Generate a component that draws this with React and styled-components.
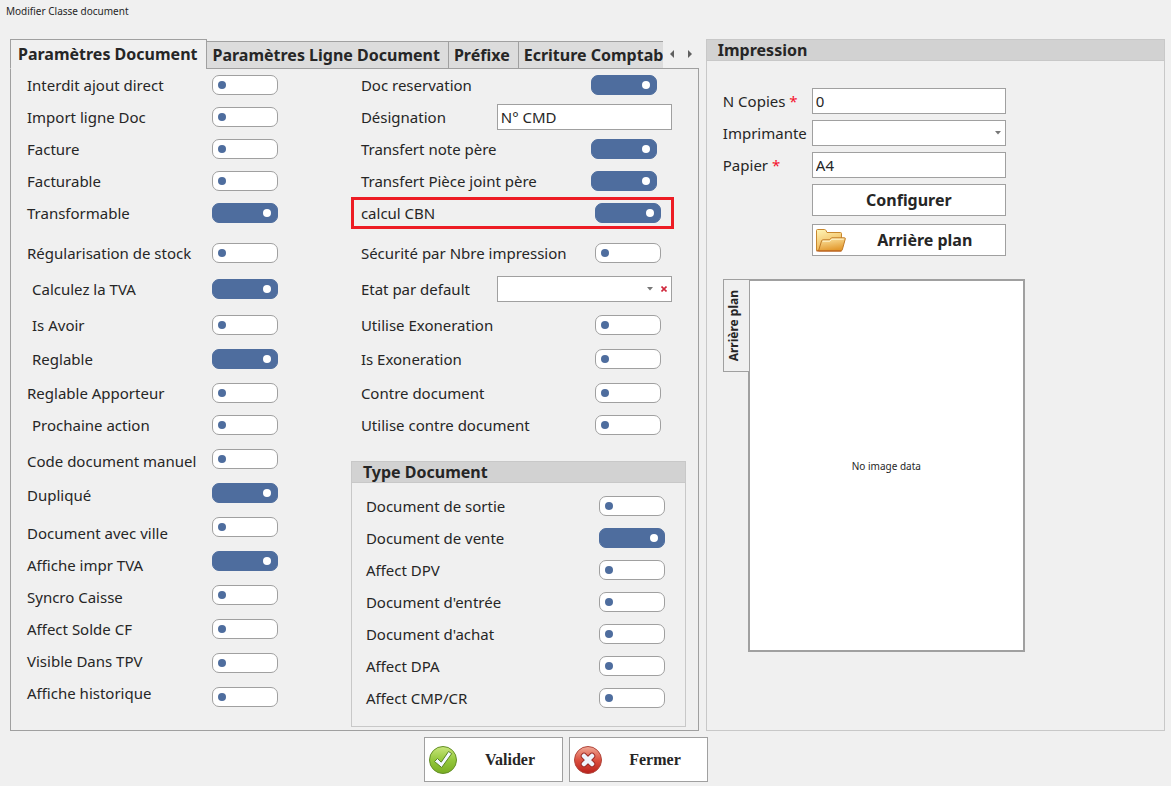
import React, { useId, useState } from "react";
import styled, { createGlobalStyle } from "styled-components";

const LINE = "#a0a0a0";
const SOFT_LINE = "#c8c8c8";
const BLUE = "#4e6d9e";

const GlobalStyle = createGlobalStyle`
  * {
    box-sizing: border-box;
  }

  body {
    margin: 0;
    background-color: #f0f0f0;
    color: #262626;
    font-family: "Noto Sans", "Open Sans", sans-serif;
    font-size: 15px;
  }

  input, select, button {
    font: inherit;
    color: inherit;
  }
`;

const Page = styled.div`
  padding: 0 6px 4px 10px;
`;

const WindowTitle = styled.h1`
  margin: 0 0 0 -4px;
  height: 39px;
  font-size: 10px;
  font-weight: normal;
  line-height: 22px;
`;

const Columns = styled.main`
  display: grid;
  grid-template-columns: 3fr 2fr;
  gap: 7px;
`;

const Settings = styled.section`
  display: flex;
  flex-direction: column;
  min-width: 0;
`;

const TabBar = styled.div`
  display: flex;
  align-items: flex-end;
  height: 30px;
  margin-bottom: -1px;
  position: relative;
`;

const TabList = styled.div`
  display: flex;
  align-items: flex-end;
  flex: 1;
  min-width: 0;
  overflow: hidden;
`;

const Tab = styled.button`
  flex: none;
  height: ${({ $active }) => ($active ? 30 : 28)}px;
  padding: ${({ $active }) => ($active ? "0 9px 0 7px" : "0 8px 0 5px")};
  margin-left: ${({ $active }) => ($active ? 0 : -1)}px;
  border: 1px solid ${LINE};
  border-bottom-color: ${({ $active }) => ($active ? "#f0f0f0" : LINE)};
  background-color: ${({ $active }) => ($active ? "#f0f0f0" : "#dcdcdc")};
  font-size: 16px;
  font-weight: bold;
  line-height: 26px;
  white-space: nowrap;
`;

const TabArrows = styled.div`
  display: flex;
  justify-content: space-between;
  width: 36px;
  height: 30px;
  padding: 0 4px;
`;

const IconButton = styled.button`
  display: flex;
  align-items: center;
  justify-content: center;
  width: 10px;
  padding: 0;
  border: 0;
  background: none;
`;

const TabPanel = styled.div`
  display: grid;
  grid-template-columns: 324fr 335fr;
  flex: 1;
  padding: 0 12px 3px 16px;
  border: 1px solid ${LINE};
`;

const Stacks = styled.div`
  display: grid;
  grid-template-columns: 185px 66px;
  align-content: start;
`;

const Stack = styled.div`
  display: flex;
  flex-direction: column;
`;

const Cell = styled.div`
  height: ${({ $height }) => $height}px;
  padding-left: ${({ $indent }) => ($indent ? 5 : 0)}px;
`;

const Label = styled.label`
  line-height: 32px;
  white-space: nowrap;
`;

const ToggleBox = styled.input`
  appearance: none;
  display: flex;
  align-items: center;
  flex: none;
  width: 66px;
  height: 20px;
  margin: ${({ $stacked }) => ($stacked ? "6px 0" : 0)};
  padding: 0 6px 0 5px;
  border: 1px solid ${LINE};
  border-radius: 7px;
  background-color: #fff;

  &::before {
    content: "";
    width: 8px;
    height: 8px;
    border-radius: 50%;
    background-color: ${BLUE};
  }

  &:checked {
    justify-content: flex-end;
    border-color: ${BLUE};
    background-color: ${BLUE};
  }

  &:checked::before {
    background-color: #fff;
  }
`;

const Row = styled.div`
  display: flex;
  align-items: center;
  justify-content: space-between;
  height: 32px;
  margin-bottom: ${({ $after }) => $after || 0}px;
  padding: 0 ${({ $right }) => $right}px 0 ${({ $left }) => $left || 10}px;
`;

const MarkedRow = styled(Row)`
  margin-right: 12px;
  border: 3px solid #ed1c24;
`;

const TextInput = styled.input`
  width: ${({ $width }) => $width || "100%"};
  height: 26px;
  padding: 0 3px;
  border: 1px solid ${LINE};
  background-color: #fff;
`;

const SelectWrap = styled.div`
  display: flex;
  align-items: center;
  gap: 6px;
  width: ${({ $width }) => $width || "100%"};
  height: 26px;
  padding-right: ${({ $clearable }) => ($clearable ? 2 : 4)}px;
  border: 1px solid ${LINE};
  background-color: #fff;
`;

const SelectBox = styled.select`
  appearance: none;
  flex: 1;
  min-width: 0;
  height: 24px;
  padding: 0 3px;
  border: 0;
  background: none;
`;

const Group = styled.section`
  border: 1px solid ${SOFT_LINE};
`;

const GroupTitle = styled.h2`
  margin: 0;
  padding-left: 11px;
  height: 21px;
  border-bottom: 1px solid ${SOFT_LINE};
  background-color: #d2d2d2;
  font-size: 16px;
  font-weight: bold;
  line-height: 20px;
`;

const TypeGroup = styled(Group)`
  margin-top: 20px;
`;

const TypeRows = styled.div`
  padding: 7px 10px 12px 4px;
`;

const Form = styled.div`
  display: grid;
  grid-template-columns: 89px 194px;
  row-gap: 6px;
  align-items: center;
  padding: 27px 16px 0;
`;

const Required = styled.span`
  color: #f5102c;
`;

const FormButton = styled.button`
  grid-column: 2;
  display: flex;
  align-items: center;
  height: 32px;
  margin-bottom: 2px;
  padding: 0 1px;
  border: 1px solid ${LINE};
  background-color: #fff;
  font-size: 16px;
  font-weight: bold;
`;

const ButtonText = styled.span`
  flex: 1;
  text-align: center;
`;

const Preview = styled.div`
  display: flex;
  align-items: flex-start;
  padding: 21px 16px 0;
`;

const SideTab = styled.button`
  position: relative;
  width: 27px;
  height: 93px;
  margin-right: -2px;
  padding: 0 4px 0 0;
  border: 1px solid ${LINE};
  background-color: #f0f0f0;
  font-size: 12px;
  font-weight: bold;
  line-height: 20px;
  white-space: nowrap;
  writing-mode: sideways-lr;
`;

const ImageBox = styled.div`
  display: flex;
  align-items: center;
  justify-content: center;
  width: 277px;
  height: 373px;
  border: 2px solid ${LINE};
  background-color: #fff;
  font-size: 10px;
`;

const Footer = styled.footer`
  display: flex;
  justify-content: center;
  gap: 6px;
  padding: 6px 43px 0 0;
`;

const FooterButton = styled.button`
  display: flex;
  align-items: center;
  width: 139px;
  height: 45px;
  padding: 0 0 0 3px;
  border: 1px solid ${LINE};
  background-color: #fff;
  font-family: "Liberation Serif", serif;
  font-size: 16px;
  font-weight: bold;
`;

const DownArrow = () => (
  <svg width="6" height="4" viewBox="0 0 6 4" aria-hidden="true">
    <path d="M0 0h6L3 3.5z" fill="#777" />
  </svg>
);

const FolderIcon = () => (
  <svg width="32" height="26" viewBox="0 0 32 26" aria-hidden="true">
    <defs>
      <linearGradient id="folderBack" x1="0" y1="0" x2="0.4" y2="1">
        <stop offset="0" stopColor="#fff6b8" />
        <stop offset="1" stopColor="#eeb04c" />
      </linearGradient>
      <linearGradient id="folderFront" x1="0" y1="0" x2="0.3" y2="1">
        <stop offset="0" stopColor="#fde9a8" />
        <stop offset="1" stopColor="#e39a2f" />
      </linearGradient>
    </defs>
    <path d="M2.500 23.500V3.500q0-1 1-1h7q1 0 1.500 1l1 2H26.500q1 0 1 1V22z" fill="url(#folderBack)" stroke="#c8872e" />
    <path d="M4.500 24L7.500 14q.4-1.200 1.600-1.200h6.400l2-2h13q1 0 .8 1L28.500 22q-.4 2-1.800 2z" fill="url(#folderFront)" stroke="#c07a26" />
    <path d="M8.500 14.200h7.400l2-2h11.800" fill="none" stroke="#fff5cf" />
    <path d="M2.500 24h25" stroke="#b8581c" />
  </svg>
);

const CheckIcon = () => (
  <svg width="30" height="30" viewBox="0 0 30 30" aria-hidden="true">
    <defs>
      <linearGradient id="green" x1="0" y1="0" x2="0" y2="1">
        <stop offset="0" stopColor="#c9e67c" />
        <stop offset="0.5" stopColor="#94c83c" />
        <stop offset="1" stopColor="#79ad22" />
      </linearGradient>
    </defs>
    <circle cx="15" cy="15" r="13.500" fill="url(#green)" stroke="#648f28" />
    <path d="M6.500 16.500l3-3 3.700 3.700L20.500 6.500l3.200 2.100L13.700 22.500z" fill="#f4f9ff" stroke="#5a8424" strokeLinejoin="round" />
  </svg>
);

const CrossIcon = () => (
  <svg width="30" height="30" viewBox="0 0 30 30" aria-hidden="true">
    <defs>
      <linearGradient id="red" x1="0" y1="0" x2="0" y2="1">
        <stop offset="0" stopColor="#f0aa98" />
        <stop offset="0.5" stopColor="#dc5140" />
        <stop offset="1" stopColor="#b91f1a" />
      </linearGradient>
    </defs>
    <circle cx="15" cy="15" r="13.500" fill="url(#red)" stroke="#b0463c" />
    <path d="M11 11l8 8M19 11l-8 8" stroke="#9c2c28" strokeWidth="6.500" strokeLinecap="round" />
    <path d="M11 11l8 8M19 11l-8 8" stroke="#eef4fc" strokeWidth="4.500" strokeLinecap="round" />
  </svg>
);

const tabs = ["Paramètres Document", "Paramètres Ligne Document", "Préfixe", "Ecriture Comptable"];

// label: space kept for the label, toggle: space kept for the switch
const options = [
  { text: "Interdit ajout direct", label: 32, toggle: 32 },
  { text: "Import ligne Doc", label: 32, toggle: 32 },
  { text: "Facture", label: 32, toggle: 32 },
  { text: "Facturable", label: 32, toggle: 32 },
  { text: "Transformable", label: 40, toggle: 40, on: true },
  { text: "Régularisation de stock", label: 36, toggle: 36 },
  { text: "Calculez la TVA", label: 36, toggle: 36, on: true, indent: true },
  { text: "Is Avoir", label: 34, toggle: 34, indent: true },
  { text: "Reglable", label: 34, toggle: 34, on: true, indent: true },
  { text: "Reglable Apporteur", label: 32, toggle: 32 },
  { text: "Prochaine action", label: 36, toggle: 34, indent: true },
  { text: "Code document manuel", label: 34, toggle: 34 },
  { text: "Dupliqué", label: 38, toggle: 34, on: true },
  { text: "Document avec ville", label: 32, toggle: 34 },
  { text: "Affiche impr TVA", label: 32, toggle: 34, on: true },
  { text: "Syncro Caisse", label: 32, toggle: 34 },
  { text: "Affect Solde CF", label: 32, toggle: 34 },
  { text: "Visible Dans TPV", label: 32, toggle: 34 },
  { text: "Affiche historique", label: 32, toggle: 32 },
];

const types = [
  { text: "Document de sortie" },
  { text: "Document de vente", on: true },
  { text: "Affect DPV" },
  { text: "Document d'entrée" },
  { text: "Document d'achat" },
  { text: "Affect DPA" },
  { text: "Affect CMP/CR" },
];

function Toggle({ on, ...rest }) {
  return <ToggleBox type="checkbox" role="switch" defaultChecked={on} {...rest} />;
}

function ToggleRow({ text, on, right = 25, left, after, marked }) {
  const id = useId();
  const Wrap = marked ? MarkedRow : Row;

  return (
    <Wrap $right={right} $left={left} $after={after}>
      <Label htmlFor={id}>{text}</Label>
      <Toggle id={id} on={on} />
    </Wrap>
  );
}

function DocumentOptions() {
  return (
    <Stacks>
      <Stack>
        {options.map(({ text, label, indent }, idx) => (
          <Cell key={text} $height={label} $indent={indent}>
            <Label htmlFor={`option-${idx}`}>{text}</Label>
          </Cell>
        ))}
      </Stack>
      <Stack>
        {options.map(({ text, toggle, on }, idx) => (
          <Cell key={text} $height={toggle}>
            <Toggle id={`option-${idx}`} on={on} $stacked />
          </Cell>
        ))}
      </Stack>
    </Stacks>
  );
}

function TransferOptions() {
  const [etat, setEtat] = useState("");

  return (
    <div>
      <ToggleRow text="Doc reservation" on right={29} />
      <Row $right={14}>
        <Label htmlFor="designation">Désignation</Label>
        <TextInput id="designation" defaultValue="N° CMD" $width="175px" />
      </Row>
      <ToggleRow text="Transfert note père" on right={29} />
      <ToggleRow text="Transfert Pièce joint père" on right={29} />
      <ToggleRow text="calcul CBN" on marked right={10} left={7} after={8} />
      <ToggleRow text="Sécurité par Nbre impression" after={4} />
      <Row $right={14} $after={4}>
        <Label htmlFor="etat">Etat par default</Label>
        <SelectWrap $width="175px" $clearable>
          <SelectBox id="etat" value={etat} onChange={(e) => setEtat(e.target.value)}>
            <option value="" />
          </SelectBox>
          <DownArrow />
          <IconButton type="button" aria-label="Effacer" onClick={() => setEtat("")}>
            <svg width="6" height="6" viewBox="0 0 6 6" aria-hidden="true">
              <path d="M0.500 0.500l5 5M5.500 0.500l-5 5" stroke="#d0283c" strokeWidth="1.600" />
            </svg>
          </IconButton>
        </SelectWrap>
      </Row>
      <ToggleRow text="Utilise Exoneration" after={2} />
      <ToggleRow text="Is Exoneration" after={2} />
      <ToggleRow text="Contre document" />
      <ToggleRow text="Utilise contre document" />
      <TypeGroup>
        <GroupTitle>Type Document</GroupTitle>
        <TypeRows>
          {types.map(({ text, on }) => (
            <ToggleRow key={text} text={text} on={on} right={10} />
          ))}
        </TypeRows>
      </TypeGroup>
    </div>
  );
}

function Printing() {
  return (
    <Group>
      <GroupTitle>Impression</GroupTitle>
      <Form>
        <label htmlFor="copies">
          N Copies <Required>*</Required>
        </label>
        <TextInput id="copies" defaultValue="0" />
        <label htmlFor="printer">Imprimante</label>
        <SelectWrap>
          <SelectBox id="printer">
            <option value="" />
          </SelectBox>
          <DownArrow />
        </SelectWrap>
        <label htmlFor="paper">
          Papier <Required>*</Required>
        </label>
        <TextInput id="paper" defaultValue="A4" />
        <FormButton type="button">
          <ButtonText>Configurer</ButtonText>
        </FormButton>
        <FormButton type="button">
          <FolderIcon />
          <ButtonText>Arrière plan</ButtonText>
        </FormButton>
      </Form>
      <Preview>
        <SideTab type="button">Arrière plan</SideTab>
        <ImageBox>No image data</ImageBox>
      </Preview>
    </Group>
  );
}

export default function App() {
  return (
    <Page>
      <GlobalStyle />
      <WindowTitle>Modifier Classe document</WindowTitle>
      <Columns>
        <Settings>
          <TabBar>
            <TabList role="tablist">
              {tabs.map((tab, idx) => (
                <Tab key={tab} type="button" role="tab" aria-selected={idx === 0} $active={idx === 0}>
                  {tab}
                </Tab>
              ))}
            </TabList>
            <TabArrows>
              <IconButton type="button" aria-label="Onglets précédents">
                <svg width="4" height="8" viewBox="0 0 4 8" aria-hidden="true">
                  <path d="M4 0v8L0 4z" fill="#606060" />
                </svg>
              </IconButton>
              <IconButton type="button" aria-label="Onglets suivants">
                <svg width="4" height="8" viewBox="0 0 4 8" aria-hidden="true">
                  <path d="M0 0v8l4-4z" fill="#606060" />
                </svg>
              </IconButton>
            </TabArrows>
          </TabBar>
          <TabPanel role="tabpanel">
            <DocumentOptions />
            <TransferOptions />
          </TabPanel>
        </Settings>
        <Printing />
      </Columns>
      <Footer>
        <FooterButton type="button">
          <CheckIcon />
          <ButtonText>Valider</ButtonText>
        </FooterButton>
        <FooterButton type="button">
          <CrossIcon />
          <ButtonText>Fermer</ButtonText>
        </FooterButton>
      </Footer>
    </Page>
  );
}
